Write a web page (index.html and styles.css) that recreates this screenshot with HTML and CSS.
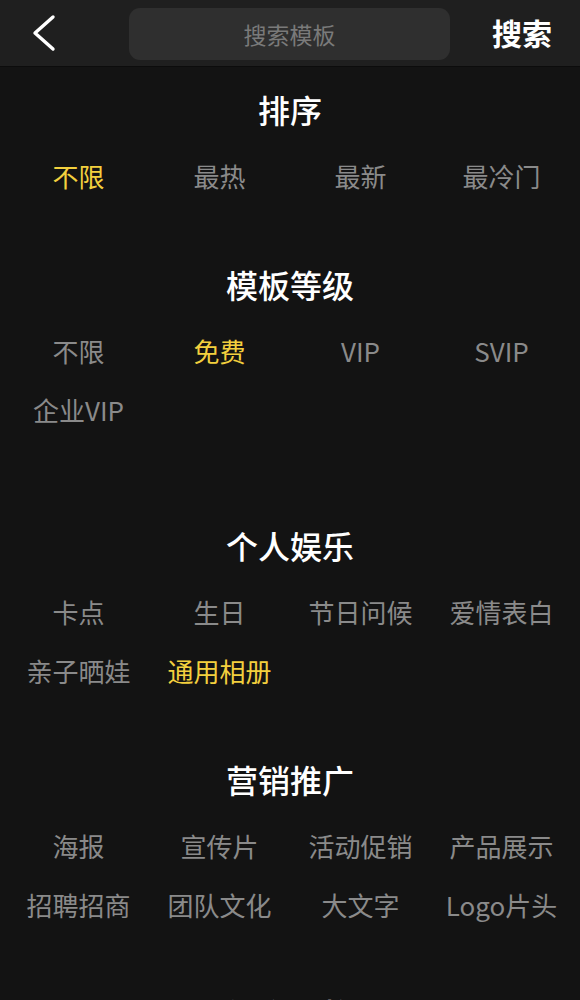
FILE: index.html
```html
<!DOCTYPE html>
<html lang="zh-CN">

<head>
    <meta charset="UTF-8">
    <meta name="viewport" content="width=device-width, initial-scale=1.0">
    <title>搜索模板</title>
    <link rel="stylesheet" href="styles.css">
</head>

<body>

<!-- top bar: back, search input, search button -->
<header class="top-bar">
    <button class="back-button" aria-label="返回">
        <svg width="28" height="38" viewBox="0 0 28 38">
            <path d="M24 3 L6 19 L24 35" fill="none" stroke="#fff" stroke-width="3.4"
                  stroke-linecap="round" stroke-linejoin="round"/>
        </svg>
    </button>
    <div class="search-box">
        <input type="text" placeholder="搜索模板">
    </div>
    <button class="search-button">搜索</button>
</header>

<main>
    <section class="filter-group">
        <h2 class="filter-title">排序</h2>
        <div class="filter-options">
            <span class="filter-option active">不限</span>
            <span class="filter-option">最热</span>
            <span class="filter-option">最新</span>
            <span class="filter-option">最冷门</span>
        </div>
    </section>

    <section class="filter-group filter-group-wide">
        <h2 class="filter-title">模板等级</h2>
        <div class="filter-options">
            <span class="filter-option">不限</span>
            <span class="filter-option active">免费</span>
            <span class="filter-option">VIP</span>
            <span class="filter-option">SVIP</span>
            <span class="filter-option">企业VIP</span>
        </div>
    </section>

    <section class="filter-group">
        <h2 class="filter-title">个人娱乐</h2>
        <div class="filter-options">
            <span class="filter-option">卡点</span>
            <span class="filter-option">生日</span>
            <span class="filter-option">节日问候</span>
            <span class="filter-option">爱情表白</span>
            <span class="filter-option">亲子晒娃</span>
            <span class="filter-option active">通用相册</span>
        </div>
    </section>

    <section class="filter-group">
        <h2 class="filter-title">营销推广</h2>
        <div class="filter-options">
            <span class="filter-option">海报</span>
            <span class="filter-option">宣传片</span>
            <span class="filter-option">活动促销</span>
            <span class="filter-option">产品展示</span>
            <span class="filter-option">招聘招商</span>
            <span class="filter-option">团队文化</span>
            <span class="filter-option">大文字</span>
            <span class="filter-option">Logo片头</span>
        </div>
    </section>

    <section class="filter-group">
        <h2 class="filter-title">视觉风格</h2>
    </section>
</main>

</body>

</html>
```

FILE: styles.css
```css
body {
    margin: 0;
    padding: 0;
    background-color: #131313;
    color: white;
    font-family: "Noto Sans CJK SC", "Noto Sans", sans-serif;
}

.top-bar {
    height: 67px;
    display: flex;
    align-items: flex-start;
    background-color: #1f1f1f;
    border-bottom: 1px solid #0c0c0c;
    box-sizing: border-box;
}

.back-button {
    width: 129px;
    height: 66px;
    padding: 0 0 0 29px;
    display: flex;
    align-items: center;
    background: none;
    border: none;
    cursor: pointer;
}

.search-box {
    width: 321px;
    height: 52px;
    margin-top: 8px;
    background-color: #2f2f2f;
    border-radius: 11px;
}

.search-box input {
    width: 100%;
    height: 100%;
    padding: 0;
    background: none;
    border: none;
    outline: none;
    text-align: center;
    color: white;
    font-family: inherit;
    font-size: 23px;
}

.search-box input::placeholder {
    color: #7a7a7a;
}

.search-button {
    flex: 1;
    height: 66px;
    padding: 0 0 2px 14px;
    background: none;
    border: none;
    color: white;
    font-family: inherit;
    font-size: 30px;
    font-weight: bold;
    cursor: pointer;
}

main {
    padding: 0 8px;
}

.filter-group {
    padding: 18px 0 47px;
}

.filter-group-wide {
    padding-bottom: 74px;
}

.filter-title {
    margin: 0 0 24px;
    height: 48px;
    line-height: 48px;
    text-align: center;
    font-size: 32px;
    font-weight: 500;
}

.filter-options {
    display: grid;
    grid-template-columns: repeat(4, 1fr);
    row-gap: 21px;
}

.filter-option {
    height: 38px;
    line-height: 38px;
    text-align: center;
    white-space: nowrap;
    color: #8a8a8a;
    font-size: 26px;
}

.filter-option.active {
    color: #f3d03e;
}
```
